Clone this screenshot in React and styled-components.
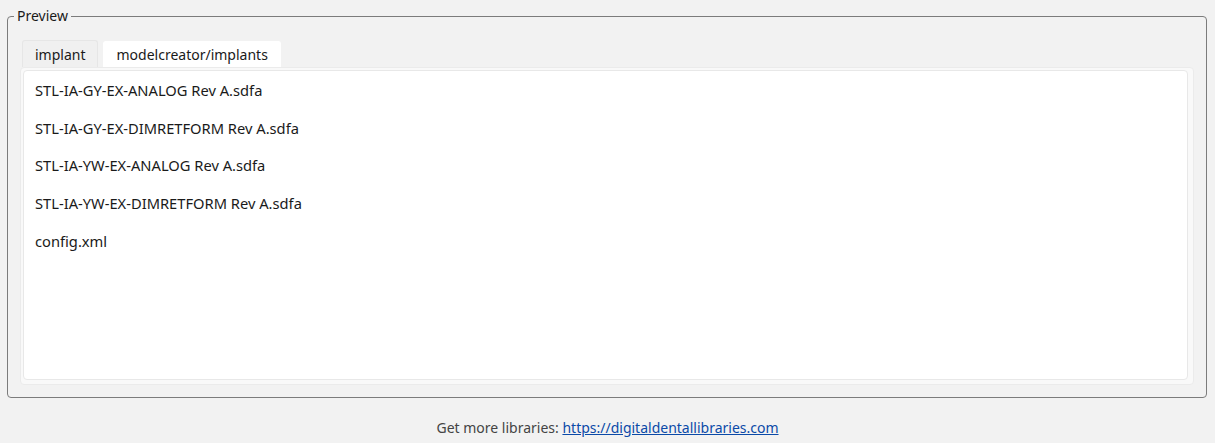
import React from 'react';
import styled, { createGlobalStyle } from 'styled-components';

const GlobalStyle = createGlobalStyle`
  html, body {
    margin: 0;
    padding: 0;
    background: #f2f2f2;
  }
  body {
    font-family: "Noto Sans", "Open Sans", sans-serif;
    color: #1f1f1f;
  }
`;

const files = [
  'STL-IA-GY-EX-ANALOG Rev A.sdfa',
  'STL-IA-GY-EX-DIMRETFORM Rev A.sdfa',
  'STL-IA-YW-EX-ANALOG Rev A.sdfa',
  'STL-IA-YW-EX-DIMRETFORM Rev A.sdfa',
  'config.xml',
];

function App() {
  return (
    <Page>
      <GlobalStyle />
      <Group>
        <Legend>Preview</Legend>
        <TabStrip>
          <Tab>implant</Tab>
          <Tab active>modelcreator/implants</Tab>
        </TabStrip>
        <Panel>
          <FileList>
            {files.map((f) => (
              <FileRow key={f}>{f}</FileRow>
            ))}
          </FileList>
        </Panel>
      </Group>
      <Footer>
        Get more libraries:{' '}
        <Link href="https://digitaldentallibraries.com">https://digitaldentallibraries.com</Link>
      </Footer>
    </Page>
  );
}

const Page = styled.div`
  display: flex;
  flex-direction: column;
  padding-top: 7px;
  height: 443px;
  box-sizing: border-box;
`;

const Group = styled.fieldset`
  margin: 0 8px 0 7px;
  padding: 15px 12px 12px 12px;
  border: 1px solid #7c7c7c;
  border-radius: 4px;
  min-width: 0;
`;

const Legend = styled.legend`
  margin-left: -6px;
  padding: 0 3px;
  font-size: 14px;
  line-height: 18px;
  color: #1a1a1a;
`;

const TabStrip = styled.div`
  display: flex;
  align-items: flex-end;
  gap: 5px;
  margin-left: 2px;
`;

const Tab = styled.div`
  box-sizing: border-box;
  height: ${(p) => (p.active ? '26px' : '27px')};
  padding: 0 12px;
  display: flex;
  align-items: center;
  font-size: 14px;
  color: #1a1a1a;
  background: ${(p) => (p.active ? '#ffffff' : '#f0f0f0')};
  border: 1px solid ${(p) => (p.active ? '#ffffff' : '#e6e6e6')};
  border-bottom: none;
  border-radius: 3px 3px 0 0;
`;

const Panel = styled.div`
  box-sizing: border-box;
  height: 318px;
  padding: 2px 5px 4px 2px;
  background: #f9f9f9;
  border: 1px solid #ebebeb;
  border-radius: 4px;
`;

const FileList = styled.div`
  box-sizing: border-box;
  height: 100%;
  padding: 0 11px;
  background: #ffffff;
  border: 1px solid #e8e8e8;
  border-radius: 4px;
`;

const FileRow = styled.div`
  height: 37.75px;
  display: flex;
  align-items: center;
  font-size: 14.7px;
  color: #1a1a1a;
  white-space: nowrap;
`;

const Footer = styled.div`
  margin-top: 20px;
  text-align: center;
  font-size: 14px;
  line-height: 20px;
  color: #444444;
`;

const Link = styled.a`
  color: #0b4aa8;
  text-decoration: underline;
`;

export default App;
